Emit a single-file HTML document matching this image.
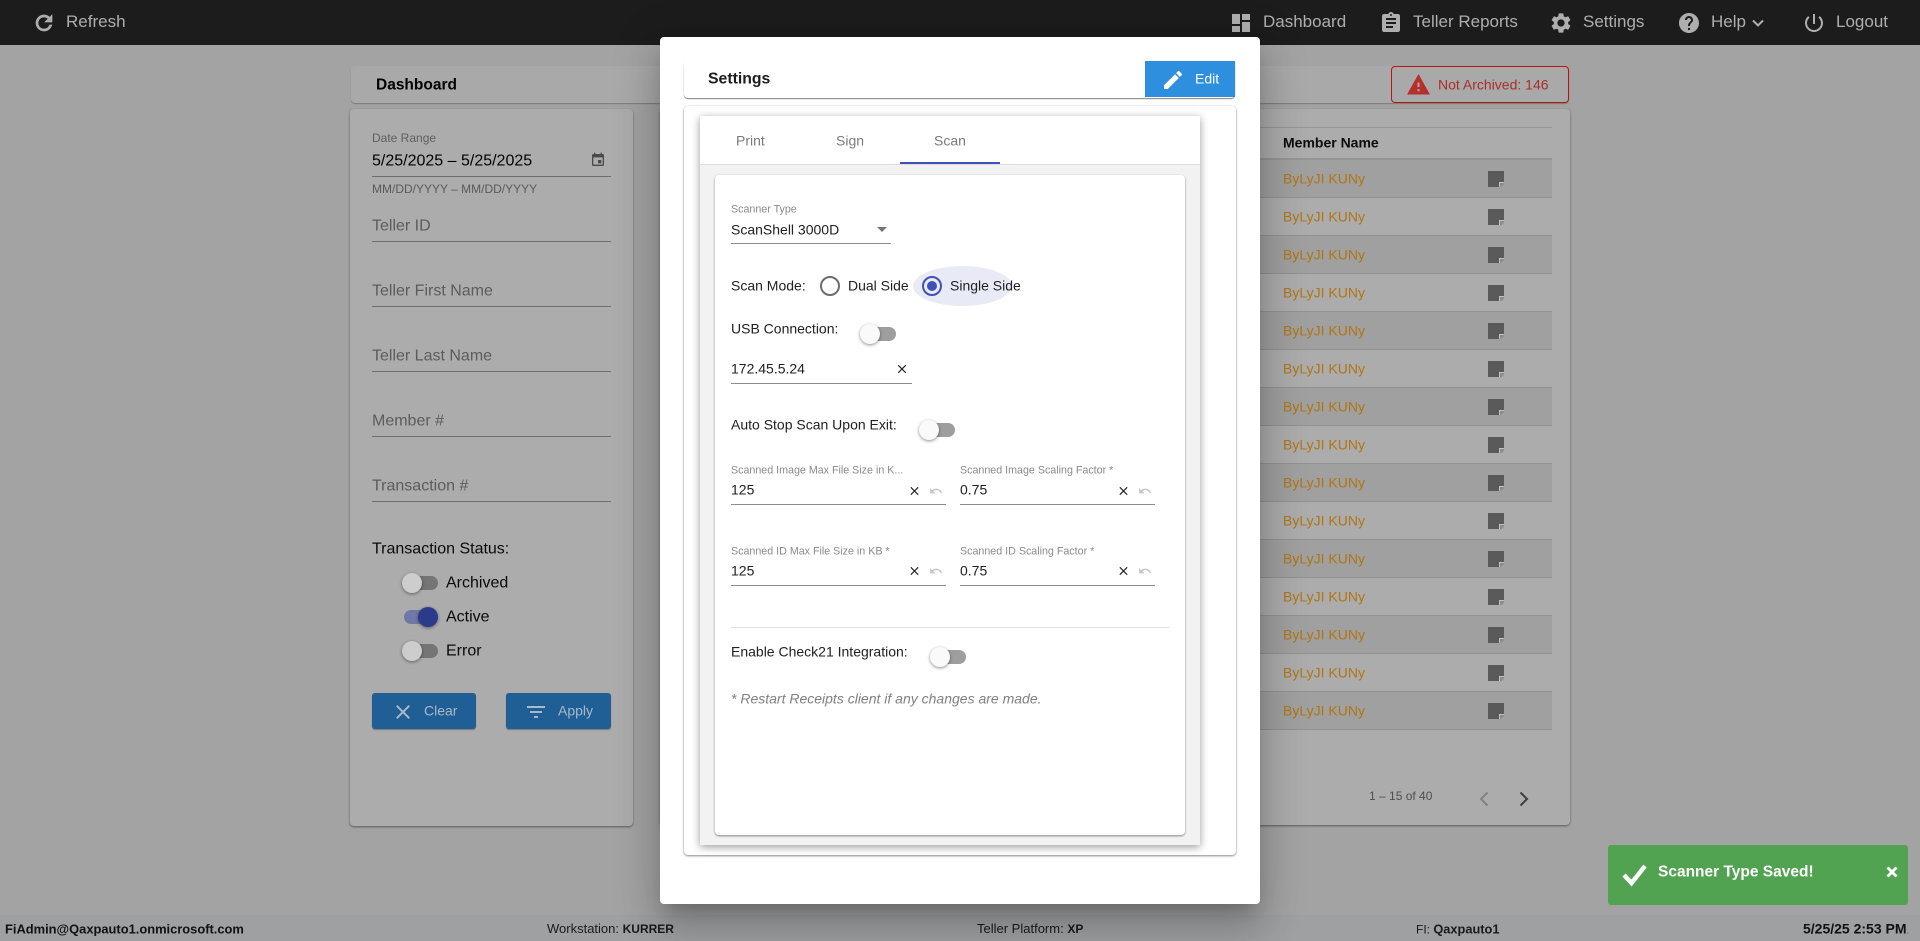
<!DOCTYPE html>
<html lang="en"><head><meta charset="utf-8"><title>Settings</title>
<style>
*{box-sizing:border-box}
html,body{margin:0;padding:0;width:1920px;height:941px;overflow:hidden;background:#a3a3a3;font-family:"Liberation Sans",sans-serif}
.a{position:absolute}
.t{position:absolute;white-space:nowrap;transform:translateY(-50%);line-height:1.2}
svg{position:absolute;display:block}
.hd{background:#1c1c1c;left:0;top:0;width:1920px;height:45px}
.hl{font-size:17px;color:#aeaeae}
.ln{position:absolute;height:1px;background:#6e6e6e;left:372px;width:239px}
.ph{font-size:16px;color:#5c5c5c;left:372px}
.card{background:#acacac;border-radius:4px;box-shadow:0 1px 2px rgba(0,0,0,.45)}
.sw{position:absolute;width:36px;height:20px}
.sw i{position:absolute;left:2px;top:3px;width:34px;height:14px;border-radius:7px;background:#9e9e9e}
.sw b{position:absolute;left:0;top:0;width:20px;height:20px;border-radius:50%;background:#fafafa;box-shadow:0 1px 3px rgba(0,0,0,.45)}
.sw.d i{background:#757575}.sw.d b{background:#cdcdcd}
.sw.on i{background:#6f79a6}.sw.on b{left:16px;background:#2c3a8a}
.row{position:absolute;left:660px;width:892px;height:38px;border-bottom:1px solid #919191}
.row.o{background:#a0a0a0}
.nm{font-size:14px;color:#b07514;left:1283px}
.lb{font-size:10.7px;color:#8a8a8a}
.tx{font-size:14px;color:#212121}
.ul{position:absolute;height:1px;background:#8c8c8c}
.tab{font-size:14px;color:#7b7b7b}
.f{font-size:12.9px;color:#111}
.f b{font-weight:700}
.f2{font-size:13px;color:#1a1a1a}
.f2 b{font-size:12px}
</style></head><body>

<!-- header -->
<div class="a hd"></div>
<svg style="left:32px;top:11px" width="24" height="24" viewBox="0 0 24 24" fill="#aeaeae" stroke="#aeaeae" stroke-width=".7"><path d="M17.65 6.35C16.2 4.9 14.21 4 12 4c-4.42 0-7.99 3.58-7.99 8s3.57 8 7.99 8c3.73 0 6.84-2.55 7.73-6h-2.08c-.82 2.33-3.04 4-5.65 4-3.31 0-6-2.69-6-6s2.69-6 6-6c1.66 0 3.14.69 4.22 1.78L13 11h7V4l-2.35 2.35z"/></svg>
<span class="t hl" style="left:66px;top:22px">Refresh</span>
<svg style="left:1229px;top:11px" width="24" height="24" viewBox="0 0 24 24" fill="#aeaeae"><path d="M3 13h8V3H3v10zm0 8h8v-6H3v6zm10 0h8V11h-8v10zm0-18v6h8V3h-8z"/></svg>
<span class="t hl" style="left:1263px;top:22px">Dashboard</span>
<svg style="left:1379px;top:11px" width="24" height="24" viewBox="0 0 24 24" fill="#aeaeae"><path d="M19 3h-4.18C14.4 1.84 13.3 1 12 1c-1.3 0-2.4.84-2.82 2H5c-1.1 0-2 .9-2 2v14c0 1.1.9 2 2 2h14c1.1 0 2-.9 2-2V5c0-1.1-.9-2-2-2zm-7 0c.55 0 1 .45 1 1s-.45 1-1 1-1-.45-1-1 .45-1 1-1zm2 14H7v-2h7v2zm3-4H7v-2h10v2zm0-4H7V7h10v2z"/></svg>
<span class="t hl" style="left:1413px;top:22px">Teller Reports</span>
<svg style="left:1549px;top:11px" width="24" height="24" viewBox="0 0 24 24" fill="#aeaeae"><path d="M19.14 12.94c.04-.3.06-.61.06-.94 0-.32-.02-.64-.07-.94l2.03-1.58c.18-.14.23-.41.12-.61l-1.92-3.32c-.12-.22-.37-.29-.59-.22l-2.39.96c-.5-.38-1.03-.7-1.62-.94l-.36-2.54c-.04-.24-.24-.41-.48-.41h-3.84c-.24 0-.43.17-.47.41l-.36 2.54c-.59.24-1.13.57-1.62.94l-2.39-.96c-.22-.08-.47 0-.59.22L2.74 8.87c-.12.21-.08.47.12.61l2.03 1.58c-.05.3-.09.63-.09.94s.02.64.07.94l-2.03 1.58c-.18.14-.23.41-.12.61l1.92 3.32c.12.22.37.29.59.22l2.39-.96c.5.38 1.03.7 1.62.94l.36 2.54c.05.24.24.41.48.41h3.84c.24 0 .44-.17.47-.41l.36-2.54c.59-.24 1.13-.56 1.62-.94l2.39.96c.22.08.47 0 .59-.22l1.92-3.32c.12-.22.07-.47-.12-.61l-2.01-1.58zM12 15.6c-1.98 0-3.6-1.62-3.6-3.6s1.62-3.6 3.6-3.6 3.6 1.62 3.6 3.6-1.62 3.6-3.6 3.6z"/></svg>
<span class="t hl" style="left:1583px;top:22px">Settings</span>
<svg style="left:1677px;top:11px" width="24" height="24" viewBox="0 0 24 24" fill="#aeaeae"><path d="M12 2C6.48 2 2 6.48 2 12s4.48 10 10 10 10-4.48 10-10S17.52 2 12 2zm1 17h-2v-2h2v2zm2.07-7.75l-.9.92C13.45 12.9 13 13.5 13 15h-2v-.5c0-1.1.45-2.1 1.17-2.83l1.24-1.26c.37-.36.59-.86.59-1.41 0-1.1-.9-2-2-2s-2 .9-2 2H8c0-2.21 1.79-4 4-4s4 1.79 4 4c0 .88-.36 1.68-.93 2.25z"/></svg>
<span class="t hl" style="left:1711px;top:22px">Help</span>
<svg style="left:1750px;top:15px" width="16" height="16" viewBox="0 0 16 16" fill="none" stroke="#aeaeae" stroke-width="2"><path d="M3 5.5l5 5 5-5"/></svg>
<svg style="left:1802px;top:11px" width="24" height="24" viewBox="0 0 24 24" fill="#aeaeae"><path d="M13 3h-2v10h2V3zm4.83 2.17l-1.42 1.42C17.99 7.86 19 9.81 19 12c0 3.87-3.13 7-7 7s-7-3.13-7-7c0-2.19 1.01-4.14 2.58-5.42L6.17 5.17C4.23 6.82 3 9.26 3 12c0 4.97 4.03 9 9 9s9-4.03 9-9c0-2.74-1.23-5.18-3.17-6.83z"/></svg>
<span class="t hl" style="left:1836px;top:22px">Logout</span>

<!-- dashboard bar -->
<div class="a card" style="left:351px;top:66px;width:1218px;height:37px;background:#a9a9a9;box-shadow:0 1px 1px rgba(0,0,0,.25)"></div>
<span class="t" style="left:376px;top:86px;font-size:15.5px;font-weight:700;color:#000">Dashboard</span>
<div class="a" style="left:1391px;top:66px;width:178px;height:37px;border:1px solid #b81414;border-radius:4px;background:#a9a9a9"></div>
<svg style="left:1407px;top:74px" width="23" height="21" viewBox="1 2 22 19.5" preserveAspectRatio="none" fill="#b5302a"><path d="M1 21h22L12 2 1 21zm12-3h-2v-2h2v2zm0-4h-2v-4h2v4z"/></svg>
<span class="t" style="left:1438px;top:85px;font-size:14px;color:#a8302a">Not Archived: 146</span>

<!-- filter card -->
<div class="a card" style="left:350px;top:109px;width:283px;height:717px"></div>
<span class="t" style="left:372px;top:138px;font-size:12px;color:#5f5f5f">Date Range</span>
<span class="t" style="left:372px;top:161px;font-size:16px;color:#000">5/25/2025 – 5/25/2025</span>
<svg style="left:590px;top:152px" width="16" height="16" viewBox="0 0 24 24" fill="#4a4a4a"><path d="M17 12h-5v5h5v-5zM16 1v2H8V1H6v2H5c-1.11 0-1.99.9-1.99 2L3 19c0 1.1.89 2 2 2h14c1.1 0 2-.9 2-2V5c0-1.1-.9-2-2-2h-1V1h-2zm3 18H5V8h14v11z"/></svg>
<div class="ln" style="top:176px"></div>
<span class="t" style="left:372px;top:189px;font-size:12px;color:#5a5a5a">MM/DD/YYYY – MM/DD/YYYY</span>
<span class="t ph" style="top:226px">Teller ID</span><div class="ln" style="top:241px"></div>
<span class="t ph" style="top:291px">Teller First Name</span><div class="ln" style="top:306px"></div>
<span class="t ph" style="top:356px">Teller Last Name</span><div class="ln" style="top:371px"></div>
<span class="t ph" style="top:421px">Member #</span><div class="ln" style="top:436px"></div>
<span class="t ph" style="top:486px">Transaction #</span><div class="ln" style="top:501px"></div>
<span class="t" style="left:372px;top:549px;font-size:16px;color:#0a0a0a">Transaction Status:</span>
<div class="sw d" style="left:402px;top:573px"><i></i><b></b></div>
<span class="t" style="left:446px;top:583px;font-size:16px;color:#0a0a0a">Archived</span>
<div class="sw d on" style="left:402px;top:607px"><i></i><b></b></div>
<span class="t" style="left:446px;top:617px;font-size:16px;color:#0a0a0a">Active</span>
<div class="sw d" style="left:402px;top:641px"><i></i><b></b></div>
<span class="t" style="left:446px;top:651px;font-size:16px;color:#0a0a0a">Error</span>
<div class="a" style="left:372px;top:693px;width:104px;height:36px;background:#1f5f96;border-radius:3px;box-shadow:0 1px 1px rgba(0,0,0,.3)"></div>
<svg style="left:391px;top:700px" width="24" height="24" viewBox="0 0 24 24" fill="#a9b9c8"><path d="M19 6.41L17.59 5 12 10.59 6.41 5 5 6.41 10.59 12 5 17.59 6.41 19 12 13.41 17.59 19 19 17.59 13.41 12z"/></svg>
<span class="t" style="left:424px;top:711px;font-size:14px;color:#a9b9c8">Clear</span>
<div class="a" style="left:506px;top:693px;width:105px;height:36px;background:#1f5f96;border-radius:3px;box-shadow:0 1px 1px rgba(0,0,0,.3)"></div>
<svg style="left:524px;top:700px" width="24" height="24" viewBox="0 0 24 24" fill="#a9b9c8"><path d="M10 18h4v-2h-4v2zM3 6v2h18V6H3zm3 7h12v-2H6v2z"/></svg>
<span class="t" style="left:558px;top:711px;font-size:14px;color:#a9b9c8">Apply</span>

<!-- table card -->
<div class="a card" style="left:660px;top:109px;width:910px;height:716px"></div>
<div class="a" style="left:660px;top:127px;width:892px;height:1px;background:#969696"></div>
<div class="a" style="left:660px;top:158px;width:892px;height:2px;background:#959595"></div>
<span class="t" style="left:1283px;top:143px;font-size:14px;font-weight:700;color:#0c0c0c">Member Name</span>

<div class="row o" style="top:160px"></div><div class="row" style="top:198px"></div><div class="row o" style="top:236px"></div><div class="row" style="top:274px"></div><div class="row o" style="top:312px"></div><div class="row" style="top:350px"></div><div class="row o" style="top:388px"></div><div class="row" style="top:426px"></div><div class="row o" style="top:464px"></div><div class="row" style="top:502px"></div><div class="row o" style="top:540px"></div><div class="row" style="top:578px"></div><div class="row o" style="top:616px"></div><div class="row" style="top:654px"></div><div class="row o" style="top:692px"></div>

<span class="t nm" style="top:179px">ByLyJI KUNy</span><span class="t nm" style="top:217px">ByLyJI KUNy</span><span class="t nm" style="top:255px">ByLyJI KUNy</span><span class="t nm" style="top:293px">ByLyJI KUNy</span><span class="t nm" style="top:331px">ByLyJI KUNy</span><span class="t nm" style="top:369px">ByLyJI KUNy</span><span class="t nm" style="top:407px">ByLyJI KUNy</span><span class="t nm" style="top:445px">ByLyJI KUNy</span><span class="t nm" style="top:483px">ByLyJI KUNy</span><span class="t nm" style="top:521px">ByLyJI KUNy</span><span class="t nm" style="top:559px">ByLyJI KUNy</span><span class="t nm" style="top:597px">ByLyJI KUNy</span><span class="t nm" style="top:635px">ByLyJI KUNy</span><span class="t nm" style="top:673px">ByLyJI KUNy</span><span class="t nm" style="top:711px">ByLyJI KUNy</span>

<svg style="left:0;top:0" width="1920" height="941" fill="#5a5a5a"><defs><g id="n"><path d="M1488 0h16v16h-16z"/><path d="M1499 11h5v1h-4v4h-1z" fill="#c2c2c2"/><path d="M1500 12h4v1l-3 3h-1z" fill="#8c8c8c"/><path d="M1504 13v3h-3z" fill="#a4a4a4"/></g></defs>
<use href="#n" y="171"/><use href="#n" y="209"/><use href="#n" y="247"/><use href="#n" y="285"/><use href="#n" y="323"/><use href="#n" y="361"/><use href="#n" y="399"/><use href="#n" y="437"/><use href="#n" y="475"/><use href="#n" y="513"/><use href="#n" y="551"/><use href="#n" y="589"/><use href="#n" y="627"/><use href="#n" y="665"/><use href="#n" y="703"/></svg>

<span class="t" style="left:1369px;top:796px;font-size:12px;color:#4e4e4e">1 – 15 of 40</span>
<svg style="left:1478px;top:790px" width="12" height="18" viewBox="0 0 12 18" fill="none" stroke="#828282" stroke-width="2"><path d="M9.5 2.5L3 9l6.5 6.5"/></svg>
<svg style="left:1518px;top:790px" width="12" height="18" viewBox="0 0 12 18" fill="none" stroke="#3c3c3c" stroke-width="2"><path d="M2.5 2.5L9 9l-6.5 6.5"/></svg>

<!-- footer -->
<div class="a" style="left:0;top:915px;width:1920px;height:26px;background:#9fa0a2"></div>
<span class="t f" style="left:5px;top:929px"><b>FiAdmin@Qaxpauto1.onmicrosoft.com</b></span>
<span class="t f2" style="left:547px;top:929px">Workstation: <b>KURRER</b></span>
<span class="t f2" style="left:977px;top:929px">Teller Platform: <b>XP</b></span>
<span class="t f2" style="left:1416px;top:929px;font-size:12px">FI: <b style="font-size:12.8px">Qaxpauto1</b></span>
<span class="t f" style="left:1803px;top:929px;font-size:14px"><b>5/25/25 2:53 PM</b><span style="font-size:9px;color:#555">.</span></span>

<!-- toast -->
<div class="a" style="left:1608px;top:845px;width:300px;height:60px;background:#51a351;border-radius:3px"></div>
<svg style="left:1621px;top:862px" width="28" height="26" viewBox="0 0 28 26" fill="none" stroke="#fff" stroke-width="4.5"><path d="M3 13l7.5 8L24 4"/></svg>
<span class="t" style="left:1658px;top:873px;font-size:15.5px;font-weight:700;color:#fff">Scanner Type Saved!</span>
<svg style="left:1886px;top:866px" width="12" height="12" viewBox="0 0 12 12" fill="none" stroke="#fff" stroke-width="2.8"><path d="M1.5 1.5l9 9M10.5 1.5l-9 9"/></svg>

<!-- modal -->
<div class="a" style="left:660px;top:37px;width:600px;height:867px;background:#fff;border-radius:4px;box-shadow:0 11px 15px -7px rgba(0,0,0,.2),0 24px 38px 3px rgba(0,0,0,.14),0 9px 46px 8px rgba(0,0,0,.12)"></div>
<div class="a" style="left:684px;top:61px;width:551px;height:37px;background:#fff;border-radius:4px;box-shadow:0 1px 1px rgba(0,0,0,.5)"></div>
<span class="t" style="left:708px;top:80px;font-size:15.8px;font-weight:700;color:#1d1d1d">Settings</span>
<div class="a" style="left:1145px;top:61px;width:90px;height:36px;background:#2e8fdf"></div>
<svg style="left:1161px;top:67px" width="24" height="26" viewBox="0 0 24 24" fill="#fff"><path d="M3 17.25V21h3.75L17.81 9.94l-3.75-3.75L3 17.25zM20.71 7.04c.39-.39.39-1.02 0-1.41l-2.34-2.34c-.39-.39-1.02-.39-1.41 0l-1.83 1.83 3.75 3.75 1.83-1.83z"/></svg>
<span class="t" style="left:1195px;top:79px;font-size:14px;color:#fff">Edit</span>

<div class="a" style="left:684px;top:106px;width:552px;height:749px;background:#fff;border-radius:4px;box-shadow:0 1px 2px rgba(0,0,0,.45),0 0 2px rgba(0,0,0,.08)"></div>
<div class="a" style="left:700px;top:116px;width:500px;height:729px;background:#f2f2f2;box-shadow:0 2px 8px rgba(0,0,0,.4)"></div>
<div class="a" style="left:700px;top:116px;width:500px;height:49px;background:#fff;border-bottom:1px solid #dedede"></div>
<span class="t tab" style="left:736px;top:141px">Print</span>
<span class="t tab" style="left:836px;top:141px">Sign</span>
<span class="t tab" style="left:934px;top:141px">Scan</span>
<div class="a" style="left:900px;top:162px;width:100px;height:2px;background:#3f51b5"></div>

<div class="a" style="left:715px;top:175px;width:470px;height:660px;background:#fff;border-radius:4px;box-shadow:0 1px 2px rgba(0,0,0,.45)"></div>
<span class="t lb" style="left:731px;top:210px">Scanner Type</span>
<span class="t tx" style="left:731px;top:230px">ScanShell 3000D</span>
<svg style="left:877px;top:227px" width="10" height="6"><path d="M0 0h10L5 5z" fill="#757575"/></svg>
<div class="ul" style="left:731px;top:243px;width:160px"></div>

<span class="t tx" style="left:731px;top:286px">Scan Mode:</span>
<div class="a" style="left:820px;top:276px;width:20px;height:20px;border:2px solid #6d6d6d;border-radius:50%"></div>
<span class="t tx" style="left:848px;top:286px">Dual Side</span>
<div class="a" style="left:913px;top:266px;width:99px;height:40px;background:#e8eaf6;border-radius:50%"></div>
<div class="a" style="left:922px;top:276px;width:20px;height:20px;border:2px solid #3f51b5;border-radius:50%"></div>
<div class="a" style="left:927px;top:281px;width:10px;height:10px;background:#3f51b5;border-radius:50%"></div>
<span class="t tx" style="left:950px;top:286px">Single Side</span>

<span class="t tx" style="left:731px;top:329px">USB Connection:</span>
<div class="sw" style="left:860px;top:324px"><i></i><b></b></div>
<span class="t tx" style="left:731px;top:369px">172.45.5.24</span>
<svg style="left:895px;top:362px" width="14" height="14" viewBox="0 0 24 24" fill="#212121"><path d="M19 6.41L17.59 5 12 10.59 6.41 5 5 6.41 10.59 12 5 17.59 6.41 19 12 13.41 17.59 19 19 17.59 13.41 12z"/></svg>
<div class="ul" style="left:731px;top:383px;width:181px"></div>

<span class="t tx" style="left:731px;top:425px">Auto Stop Scan Upon Exit:</span>
<div class="sw" style="left:919px;top:420px"><i></i><b></b></div>

<span class="t lb" style="left:731px;top:471px">Scanned Image Max File Size in K...</span>
<span class="t lb" style="left:960px;top:471px">Scanned Image Scaling Factor *</span>
<span class="t tx" style="left:731px;top:490px">125</span>
<span class="t tx" style="left:960px;top:490px">0.75</span>
<div class="ul" style="left:731px;top:504px;width:215px"></div>
<div class="ul" style="left:960px;top:504px;width:195px"></div>

<span class="t lb" style="left:731px;top:552px">Scanned ID Max File Size in KB *</span>
<span class="t lb" style="left:960px;top:552px">Scanned ID Scaling Factor *</span>
<span class="t tx" style="left:731px;top:571px">125</span>
<span class="t tx" style="left:960px;top:571px">0.75</span>
<div class="ul" style="left:731px;top:585px;width:215px"></div>
<div class="ul" style="left:960px;top:585px;width:195px"></div>

<svg style="left:0;top:0" width="1920" height="941"><defs>
<g id="x"><path transform="scale(.5833)" fill="#212121" d="M19 6.41L17.59 5 12 10.59 6.41 5 5 6.41 10.59 12 5 17.59 6.41 19 12 13.41 17.59 19 19 17.59 13.41 12z"/></g>
<g id="u"><path transform="scale(.5833)" fill="#c4c4c4" d="M12.5 8c-2.65 0-5.05.99-6.9 2.6L2 7v9h9l-3.62-3.62c1.39-1.16 3.16-1.88 5.12-1.88 3.54 0 6.55 2.31 7.6 5.5l2.37-.78C21.08 11.03 17.15 8 12.5 8z"/></g></defs>
<use href="#x" x="907.5" y="484"/><use href="#u" x="929" y="484"/>
<use href="#x" x="1116.5" y="484"/><use href="#u" x="1138" y="484"/>
<use href="#x" x="907.5" y="564"/><use href="#u" x="929" y="564"/>
<use href="#x" x="1116.5" y="564"/><use href="#u" x="1138" y="564"/>
</svg>

<div class="a" style="left:731px;top:627px;width:438px;height:1px;background:#e0e0e0"></div>
<span class="t tx" style="left:731px;top:652px">Enable Check21 Integration:</span>
<div class="sw" style="left:930px;top:647px"><i></i><b></b></div>
<span class="t" style="left:731px;top:699px;font-size:14px;font-style:italic;color:#808080">* Restart Receipts client if any changes are made.</span>
</body></html>
